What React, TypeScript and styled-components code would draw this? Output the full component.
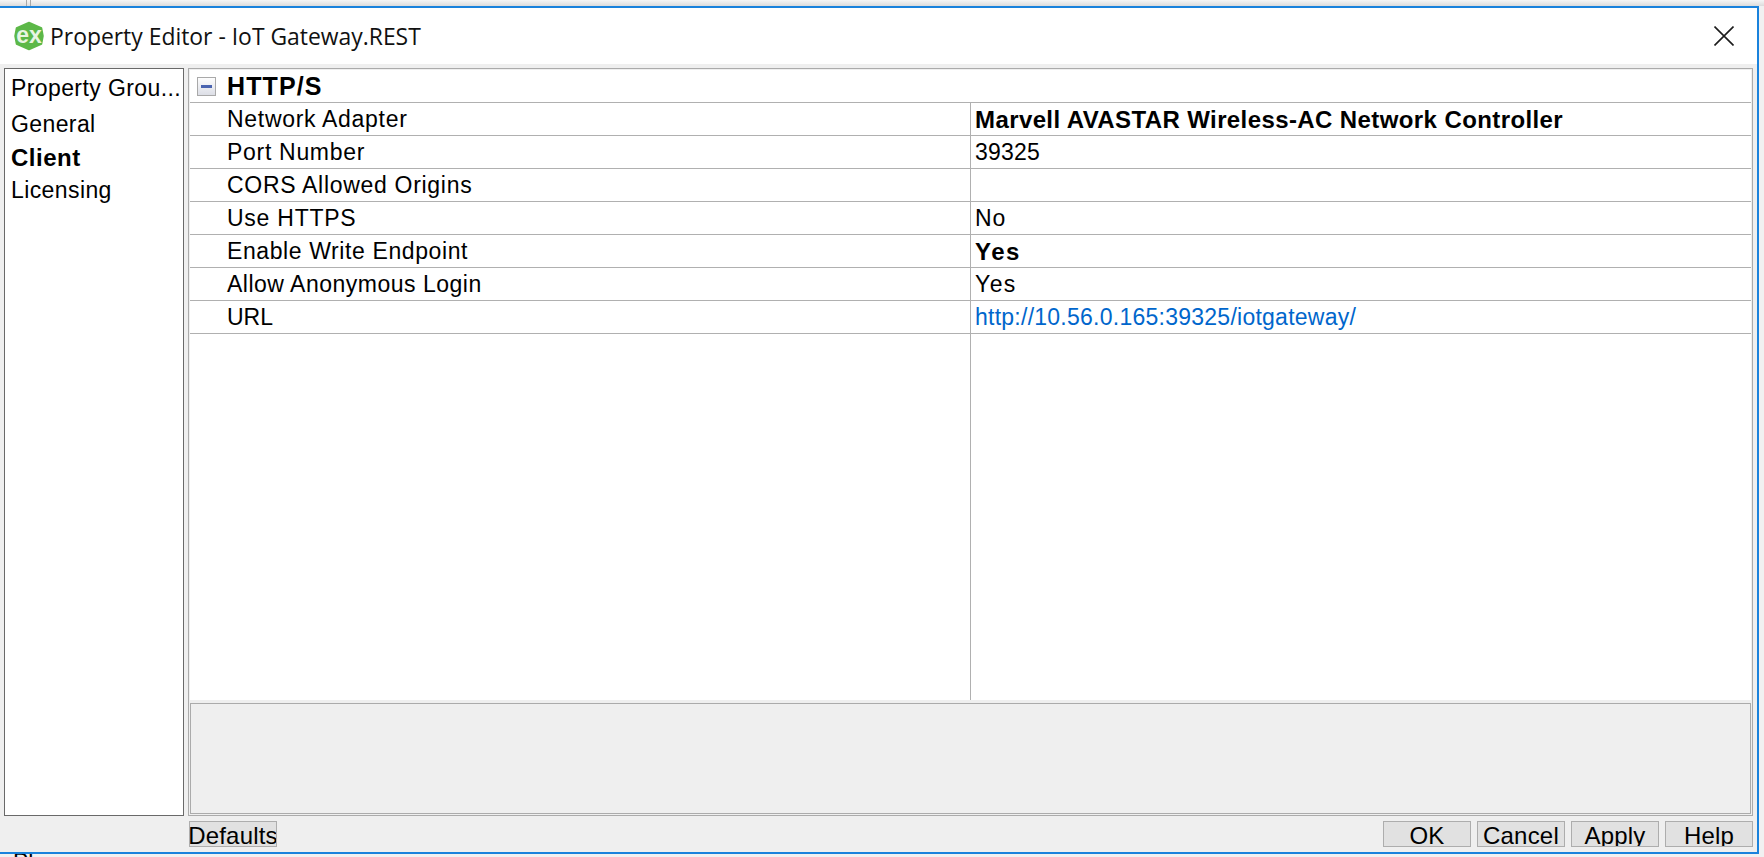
import React from 'react';
import styled, { createGlobalStyle } from 'styled-components';

const GlobalStyle = createGlobalStyle`
  html, body {
    margin: 0;
    padding: 0;
    background: #f1f1f1;
  }
  * {
    box-sizing: border-box;
  }
`;

const Page = styled.div`
  width: 1764px;
  height: 857px;
  overflow: hidden;
  display: flex;
  flex-direction: column;
  font-family: "Liberation Sans", Arial, sans-serif;
  font-size: 23px;
  color: #000;
`;

const BackStrip = styled.div`
  height: 6px;
  flex: none;
  padding-left: 26px;
  background: linear-gradient(#f6f6f6, #dcdcdc);
`;

const BackLine = styled.div`
  width: 5px;
  height: 6px;
  border-left: 1px solid #a8a8a8;
  border-right: 1px solid #a8a8a8;
`;

const Dialog = styled.div`
  width: 1759px;
  height: 848px;
  flex: none;
  display: flex;
  flex-direction: column;
  background: #efefef;
  border: 2px solid #1a82dc;
  border-left: none;
`;

const TitleBar = styled.div`
  height: 56px;
  flex: none;
  display: flex;
  align-items: center;
  padding: 0 23px 0 14px;
  background: #fff;
`;

const TitleText = styled.div`
  margin-left: 6px;
  flex: 1;
  font-family: "Open Sans", sans-serif;
  font-size: 22.9px;
  color: #111;
`;

const Body = styled.div`
  flex: 1;
  display: flex;
  gap: 4px;
  padding: 4px 4px 0 4px;
`;

const GroupList = styled.div`
  width: 180px;
  height: 748px;
  flex: none;
  padding-top: 3px;
  background: #fff;
  border: 1px solid #696969;
`;

const GroupItem = styled.div<{ $active?: boolean }>`
  height: 33px;
  line-height: 33px;
  padding-left: 6px;
  white-space: nowrap;
  font-size: ${(p) => (p.$active ? '24px' : '23px')};
  font-weight: ${(p) => (p.$active ? 700 : 400)};
  letter-spacing: ${(p) => (p.$active ? '0.5px' : '0.4px')};

  &:first-child {
    margin-bottom: 3px;
  }
`;

const RightColumn = styled.div`
  flex: 1;
  display: flex;
  flex-direction: column;
`;

const EditorFrame = styled.div`
  height: 748px;
  display: flex;
  flex-direction: column;
  padding: 1px;
  border: 1px solid #ababab;
`;

const Grid = styled.div`
  height: 630px;
  flex: none;
  display: flex;
  flex-direction: column;
  background: #fff;
`;

const GroupHeader = styled.div`
  height: 33px;
  flex: none;
  display: flex;
  align-items: center;
  padding-left: 7px;
  border-bottom: 1px solid #b0b0b0;
  font-size: 25px;
  font-weight: 700;
  letter-spacing: 1.1px;
`;

const Toggle = styled.div`
  width: 19px;
  height: 19px;
  flex: none;
  display: flex;
  align-items: center;
  justify-content: center;
  margin-right: 11px;
  border: 1px solid #a9a9a9;
  background: linear-gradient(#fdfdfd, #dcdee6);
`;

const ToggleBar = styled.div`
  width: 11px;
  height: 3px;
  background: #4a64b0;
`;

const Row = styled.div`
  height: 33px;
  flex: none;
  display: grid;
  grid-template-columns: 780px 1fr;
  border-bottom: 1px solid #b0b0b0;
  line-height: 33px;
`;

const NameCell = styled.div<{ $track: number }>`
  padding-left: 37px;
  white-space: nowrap;
  letter-spacing: ${(p) => p.$track}px;
`;

const ValueCell = styled.div<{ $bold?: boolean; $link?: boolean; $track: number }>`
  padding-left: 4px;
  white-space: nowrap;
  border-left: 1px solid #b0b0b0;
  font-size: ${(p) => (p.$bold ? '24px' : '23px')};
  font-weight: ${(p) => (p.$bold ? 700 : 400)};
  color: ${(p) => (p.$link ? '#0066cc' : '#000')};
  letter-spacing: ${(p) => p.$track}px;
`;

const EmptyColumns = styled.div`
  flex: 1;
  margin-left: 780px;
  border-left: 1px solid #b0b0b0;
`;

const Description = styled.div`
  height: 111px;
  flex: none;
  margin-top: 3px;
  background: #efefef;
  border: 1px solid #ababab;
`;

const ButtonRow = styled.div`
  display: flex;
  gap: 6px;
  margin-top: 5px;
  padding-left: 1px;
`;

const PushButton = styled.div`
  width: 88px;
  height: 26px;
  display: flex;
  justify-content: center;
  background: #e1e1e1;
  border: 1px solid #adadad;
  font-size: 24px;
  letter-spacing: 0.2px;
  line-height: 28px;
  white-space: nowrap;
  overflow: hidden;
`;

const ButtonSpacer = styled.div`
  flex: 1;
`;

const BackText = styled.div`
  height: 3px;
  flex: none;
  padding-left: 13px;
  overflow: hidden;
  line-height: 16px;
  background: #f1f1f1;
`;

function ExLogo() {
  return (
    <svg width="30" height="30" viewBox="0 0 30 30" style={{ flex: 'none' }}>
      <path d="M15 1.5 L27.5 7 L29 15 L27.5 23 L15 28.5 L2.5 23 L1 15 L2.5 7 Z" fill="#5cb848" stroke="#5cb848" strokeWidth="1.5" strokeLinejoin="round" />
      <text x="15" y="21.5" textAnchor="middle" fontFamily="'Liberation Sans', sans-serif" fontWeight="700" fontSize="23" fill="#e8f5e2">ex</text>
    </svg>
  );
}

function CloseIcon() {
  return (
    <svg width="20" height="20" viewBox="0 0 20 20" style={{ flex: 'none' }}>
      <path d="M0.5 0.5 L19.5 19.5 M19.5 0.5 L0.5 19.5" stroke="#1c1c1c" strokeWidth="1.6" fill="none" />
    </svg>
  );
}

const groups = [
  { label: 'Property Grou...' },
  { label: 'General' },
  { label: 'Client', active: true },
  { label: 'Licensing' },
];

const properties = [
  { name: 'Network Adapter', nameTrack: 0.7, value: 'Marvell AVASTAR Wireless-AC Network Controller', bold: true, track: 0.4 },
  { name: 'Port Number', nameTrack: 0.7, value: '39325', track: 0.2 },
  { name: 'CORS Allowed Origins', nameTrack: 0.7, value: '', track: 0 },
  { name: 'Use HTTPS', nameTrack: 0.75, value: 'No', track: 1 },
  { name: 'Enable Write Endpoint', nameTrack: 0.6, value: 'Yes', bold: true, track: 1.5 },
  { name: 'Allow Anonymous Login', nameTrack: 0.5, value: 'Yes', track: 1.4 },
  { name: 'URL', nameTrack: 0, value: 'http://10.56.0.165:39325/iotgateway/', link: true, track: 0.25 },
];

export default function App() {
  return (
    <Page>
      <GlobalStyle />
      <BackStrip>
        <BackLine />
      </BackStrip>
      <Dialog>
        <TitleBar>
          <ExLogo />
          <TitleText>Property Editor - IoT Gateway.REST</TitleText>
          <CloseIcon />
        </TitleBar>
        <Body>
          <GroupList>
            {groups.map((g) => (
              <GroupItem key={g.label} $active={g.active}>{g.label}</GroupItem>
            ))}
          </GroupList>
          <RightColumn>
            <EditorFrame>
              <Grid>
                <GroupHeader>
                  <Toggle><ToggleBar /></Toggle>
                  HTTP/S
                </GroupHeader>
                {properties.map((p) => (
                  <Row key={p.name}>
                    <NameCell $track={p.nameTrack}>{p.name}</NameCell>
                    <ValueCell $bold={p.bold} $link={p.link} $track={p.track}>{p.value}</ValueCell>
                  </Row>
                ))}
                <EmptyColumns />
              </Grid>
              <Description />
            </EditorFrame>
            <ButtonRow>
              <PushButton>Defaults</PushButton>
              <ButtonSpacer />
              <PushButton>OK</PushButton>
              <PushButton>Cancel</PushButton>
              <PushButton>Apply</PushButton>
              <PushButton>Help</PushButton>
            </ButtonRow>
          </RightColumn>
        </Body>
      </Dialog>
      <BackText>Plugins</BackText>
    </Page>
  );
}
